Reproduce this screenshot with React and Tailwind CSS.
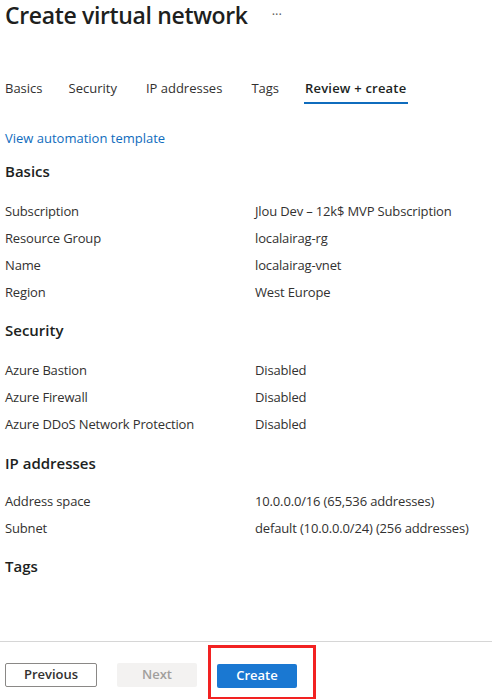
export default function App() {
  const font = { fontFamily: '"Open Sans", "Noto Sans", sans-serif' };
  const Row = ({ label, value }) => (
    <div className="flex h-[27px] items-center text-[13px] text-[#323130] tracking-[-0.15px]">
      <div className="w-[250px]">{label}</div>
      <div>{value}</div>
    </div>
  );
  const Heading = ({ children, mt }) => (
    <div className={`text-[15px] font-semibold text-[#201f1e] ${mt}`}>{children}</div>
  );
  return (
    <div className="w-[492px] h-[699px] bg-white relative overflow-hidden" style={font}>
      <div className="px-[5px]">
        <div className="flex items-center h-[30px]">
          <h1 className="text-[23px] font-semibold text-[#201f1e] tracking-[-0.35px]">Create virtual network</h1>
          <span className="ml-[24px] text-[#605e5c] text-[13px] leading-none mt-[-2px]">···</span>
        </div>
        <div className="flex mt-[49px] text-[13px] text-[#323130] h-[30px]">
          <div className="mr-[26px]">Basics</div>
          <div className="mr-[29px]">Security</div>
          <div className="mr-[29px]">IP addresses</div>
          <div className="mr-[26px]">Tags</div>
          <div className="relative font-semibold text-[#201f1e] tracking-[0.2px]">
            Review + create
            <div className="absolute left-[-1px] right-[-2px] top-[23px] h-[2px] bg-[#0f6cbd]"></div>
          </div>
        </div>
        <div className="mt-[20px] text-[13px] text-[#0f6cbd]">View automation template</div>
        <Heading mt="mt-[11px]">Basics</Heading>
        <div className="mt-[16px]">
          <Row label="Subscription" value="Jlou Dev – 12k$ MVP Subscription" />
          <Row label="Resource Group" value="localairag-rg" />
          <Row label="Name" value="localairag-vnet" />
          <Row label="Region" value="West Europe" />
        </div>
        <Heading mt="mt-[13px]">Security</Heading>
        <div className="mt-[16px]">
          <Row label="Azure Bastion" value="Disabled" />
          <Row label="Azure Firewall" value="Disabled" />
          <Row label="Azure DDoS Network Protection" value="Disabled" />
        </div>
        <Heading mt="mt-[13px]">IP addresses</Heading>
        <div className="mt-[14px]">
          <Row label="Address space" value="10.0.0.0/16 (65,536 addresses)" />
          <Row label="Subnet" value="default (10.0.0.0/24) (256 addresses)" />
        </div>
        <Heading mt="mt-[13px]">Tags</Heading>
      </div>
      <div className="absolute left-0 right-0 top-[641px] border-t border-[#d6d6d6]">
        <div className="flex items-center px-[5px] pt-[20px] gap-[20px]">
          <button className="w-[92px] h-[24px] border border-[#8a8886] rounded-[2px] text-[13px] font-semibold text-[#323130] bg-white">Previous</button>
          <button className="w-[80px] h-[24px] rounded-[2px] text-[13px] font-semibold text-[#a19f9d] bg-[#f3f2f1]">Next</button>
          <div className="relative">
            <button className="w-[80px] h-[24px] rounded-[2px] text-[13px] font-semibold text-white bg-[#1a78d2]">Create</button>
            <div className="absolute left-[-9px] top-[-17px] w-[108px] h-[55px] border-[3px] border-[#f22222]"></div>
          </div>
        </div>
      </div>
    </div>
  );
}
